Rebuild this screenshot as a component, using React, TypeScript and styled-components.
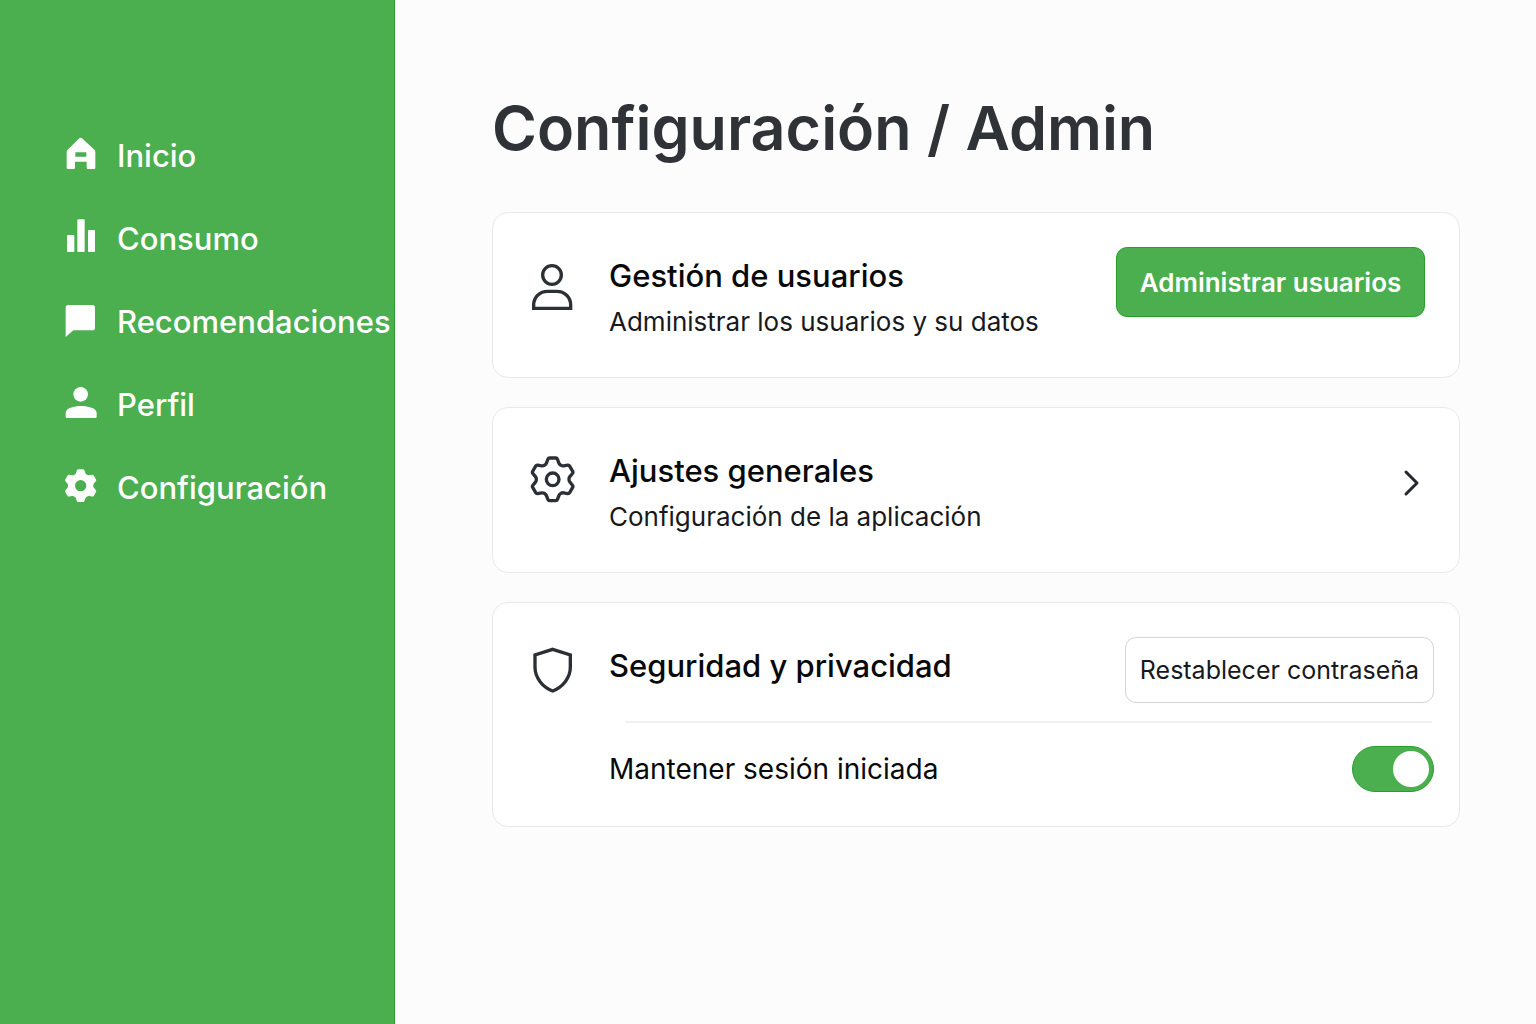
import React, { useState } from "react";
import styled, { createGlobalStyle, css } from "styled-components";

const GlobalStyle = createGlobalStyle`
  *, *::before, *::after { box-sizing: border-box; }
  body {
    margin: 0;
    background: #fcfcfc;
    color: #0b0c10;
    font-family: Inter, "Liberation Sans", sans-serif;
  }
`;

const Page = styled.div`
  display: flex;
  min-height: 100vh;
`;

const Sidebar = styled.nav`
  flex: none;
  width: 395px;
  padding: 136px 0 40px 64px;
  background: #4bae4f;
  border-right: 1px solid #26a02b;
`;

const NavList = styled.ul`
  display: flex;
  flex-direction: column;
  gap: 43px;
  margin: 0;
  padding: 0;
  list-style: none;
`;

const NavLink = styled.a`
  display: flex;
  align-items: center;
  gap: 19px;
  color: #fff;
  font-size: 31px;
  font-weight: 500;
  line-height: 40px;
  text-decoration: none;
`;

const NavGlyph = styled.svg`
  flex: none;
  width: 34px;
  height: 40px;
  fill: #fff;
`;

const Main = styled.main`
  flex: 1;
  min-width: 0;
  padding: 90px 76px 60px 97px;
`;

const Title = styled.h1`
  margin: 0 0 46px;
  color: #2f3337;
  font-size: 61px;
  font-weight: 600;
  line-height: 76px;
`;

const Cards = styled.div`
  display: flex;
  flex-direction: column;
  gap: 29px;
`;

const Card = styled.section<{ $detailed?: boolean }>`
  display: flex;
  align-items: flex-start;
  gap: 33px;
  padding: ${(p) => (p.$detailed ? "34px 25px 34px 37px" : "34px 34px 32px 37px")};
  background: #fff;
  border: 1px solid #e8e9eb;
  border-radius: 16px;
`;

const CardGlyph = styled.svg`
  flex: none;
  width: 46px;
  height: 56px;
  margin-top: 8px;
  fill: none;
  stroke: #2b3036;
  stroke-width: 10;
`;

const CardBody = styled.div`
  flex: 1;
  min-width: 0;
`;

const CardText = styled.div`
  padding-top: 6px;
`;

const CardTitle = styled.h2`
  margin: 0;
  color: #08090b;
  font-size: 31px;
  font-weight: 500;
  line-height: 46px;
`;

const CardNote = styled.p`
  margin: 0;
  color: #17191d;
  font-size: 26px;
  line-height: 46px;
`;

const Row = styled.div`
  display: flex;
  align-items: flex-start;
  justify-content: space-between;
`;

const Button = styled.button<{ $primary?: boolean }>`
  flex: none;
  width: 309px;
  height: 66px;
  padding: 0;
  border: 1px solid #d3d4d6;
  border-radius: 11px;
  background: #fff;
  color: #17191d;
  font-family: inherit;
  font-size: 25px;
  font-weight: 400;
  white-space: nowrap;
  cursor: pointer;
  ${(p) =>
    p.$primary &&
    css`
      height: 70px;
      border-color: #26a02b;
      background: #4bae4f;
      color: #fff;
      font-size: 26px;
      font-weight: 600;
    `}
`;

const OpenButton = styled.button`
  display: flex;
  align-items: center;
  justify-content: center;
  flex: none;
  width: 28px;
  height: 82px;
  padding: 0;
  border: 0;
  background: none;
  cursor: pointer;
`;

const Chevron = styled.svg`
  width: 20px;
  height: 30px;
  fill: none;
  stroke: #23282e;
  stroke-width: 3;
  stroke-linecap: round;
  stroke-linejoin: round;
`;

const Divider = styled.hr`
  height: 2px;
  margin: 18px 2px 23px 16px;
  border: 0;
  background: #f0f0f1;
`;

const ToggleLabel = styled.label`
  color: #08090b;
  font-size: 28px;
  line-height: 46px;
`;

const Toggle = styled.input`
  flex: none;
  appearance: none;
  display: flex;
  align-items: center;
  width: 82px;
  height: 46px;
  margin: 0;
  padding: 0 4px;
  border: 1px solid #a9adb2;
  border-radius: 23px;
  background: #c3c6ca;
  cursor: pointer;

  &::before {
    content: "";
    width: 36px;
    height: 36px;
    border-radius: 50%;
    background: #fff;
  }

  &:checked {
    justify-content: flex-end;
    border-color: #26a02b;
    background: #4bae4f;
  }
`;

type Point = [number, number];

/* Six-toothed gear centred on the origin, with softened corners. */
function gearPath(soften: number): string {
  const points: Point[] = [];
  for (let i = 0; i < 6; i++) {
    const a = (i * Math.PI) / 3;
    for (const [x, y] of [[-13, -64], [13, -64], [20, -45], [29, -40]] as Point[]) {
      points.push([
        x * Math.cos(a) - y * Math.sin(a),
        x * Math.sin(a) + y * Math.cos(a),
      ]);
    }
  }
  const toward = (from: Point, to: Point): string => {
    const t = soften / Math.hypot(to[0] - from[0], to[1] - from[1]);
    return `${(from[0] + (to[0] - from[0]) * t).toFixed(2)} ${(from[1] + (to[1] - from[1]) * t).toFixed(2)}`;
  };
  const n = points.length;
  return (
    points
      .map((p, i) => {
        const before = toward(p, points[(i + n - 1) % n]);
        const after = toward(p, points[(i + 1) % n]);
        return `${i === 0 ? "M" : "L"}${before}Q${p[0].toFixed(2)} ${p[1].toFixed(2)} ${after}`;
      })
      .join("") + "Z"
  );
}

const GEAR = gearPath(4);

const navItems = [
  {
    label: "Inicio",
    art: (
      <path
        fillRule="evenodd"
        d="M46 7Q50 3 54 7L91 41Q94 44 94 48V95Q94 99 90 99H72Q68 99 68 95V77H33V95Q33 99 29 99H12Q8 99 8 95V48Q8 44 11 41ZM34 49V62H67V49Z"
      />
    ),
  },
  {
    label: "Consumo",
    art: (
      <>
        <rect x="9" y="48" width="22" height="51" rx="3" />
        <rect x="40" y="1" width="22" height="98" rx="3" />
        <rect x="72" y="33" width="21" height="66" rx="3" />
      </>
    ),
  },
  {
    label: "Recomendaciones",
    art: <path d="M13 9H85Q93 9 93 17V77Q93 85 85 85H28L5 105V17Q5 9 13 9Z" />,
  },
  {
    label: "Perfil",
    art: (
      <>
        <circle cx="50" cy="28" r="22" />
        <path d="M5 84C5 69 30 63 51 63C72 63 98 69 98 84V95Q98 99 94 99H9Q5 99 5 95Z" />
      </>
    ),
  },
  {
    label: "Configuración",
    art: (
      <path
        fillRule="evenodd"
        transform="translate(50 53) scale(.77)"
        d={`${GEAR}M-22 0a22 22 0 1 0 44 0a22 22 0 1 0 -44 0Z`}
      />
    ),
  },
];

export default function App() {
  const [keepSession, setKeepSession] = useState(true);

  return (
    <>
      <GlobalStyle />
      <Page>
        <Sidebar>
          <NavList>
            {navItems.map((item) => (
              <li key={item.label}>
                <NavLink href="#">
                  <NavGlyph viewBox="0 0 102 120" aria-hidden="true">
                    {item.art}
                  </NavGlyph>
                  {item.label}
                </NavLink>
              </li>
            ))}
          </NavList>
        </Sidebar>

        <Main>
          <Title>Configuración / Admin</Title>
          <Cards>
            <Card>
              <CardGlyph viewBox="0 0 138 168" aria-hidden="true">
                <circle cx="66" cy="60" r="28" />
                <path d="M11 160V150C11 127 29 109 53 109H80C104 109 122 127 122 150V160Z" />
              </CardGlyph>
              <CardBody>
                <CardText>
                  <CardTitle>Gestión de usuarios</CardTitle>
                  <CardNote>Administrar los usuarios y su datos</CardNote>
                </CardText>
              </CardBody>
              <Button $primary>Administrar usuarios</Button>
            </Card>

            <Card>
              <CardGlyph viewBox="0 0 138 168" aria-hidden="true">
                <path transform="translate(68 88)" strokeLinejoin="round" d={GEAR} />
                <circle cx="68" cy="88" r="19" />
              </CardGlyph>
              <CardBody>
                <CardText>
                  <CardTitle>Ajustes generales</CardTitle>
                  <CardNote>Configuración de la aplicación</CardNote>
                </CardText>
              </CardBody>
              <OpenButton aria-label="Abrir ajustes generales">
                <Chevron viewBox="0 0 20 30" aria-hidden="true">
                  <path d="M5 4L16 15L5 26" />
                </Chevron>
              </OpenButton>
            </Card>

            <Card $detailed>
              <CardGlyph viewBox="0 0 138 168" aria-hidden="true">
                <path d="M68 13L121 30V67C121 99 98 126 68 138C38 126 15 99 15 67V30Z" />
              </CardGlyph>
              <CardBody>
                <Row>
                  <CardText>
                    <CardTitle>Seguridad y privacidad</CardTitle>
                  </CardText>
                  <Button>Restablecer contraseña</Button>
                </Row>
                <Divider />
                <Row>
                  <ToggleLabel htmlFor="keep-session">Mantener sesión iniciada</ToggleLabel>
                  <Toggle
                    id="keep-session"
                    type="checkbox"
                    role="switch"
                    checked={keepSession}
                    onChange={(e) => setKeepSession(e.target.checked)}
                  />
                </Row>
              </CardBody>
            </Card>
          </Cards>
        </Main>
      </Page>
    </>
  );
}
